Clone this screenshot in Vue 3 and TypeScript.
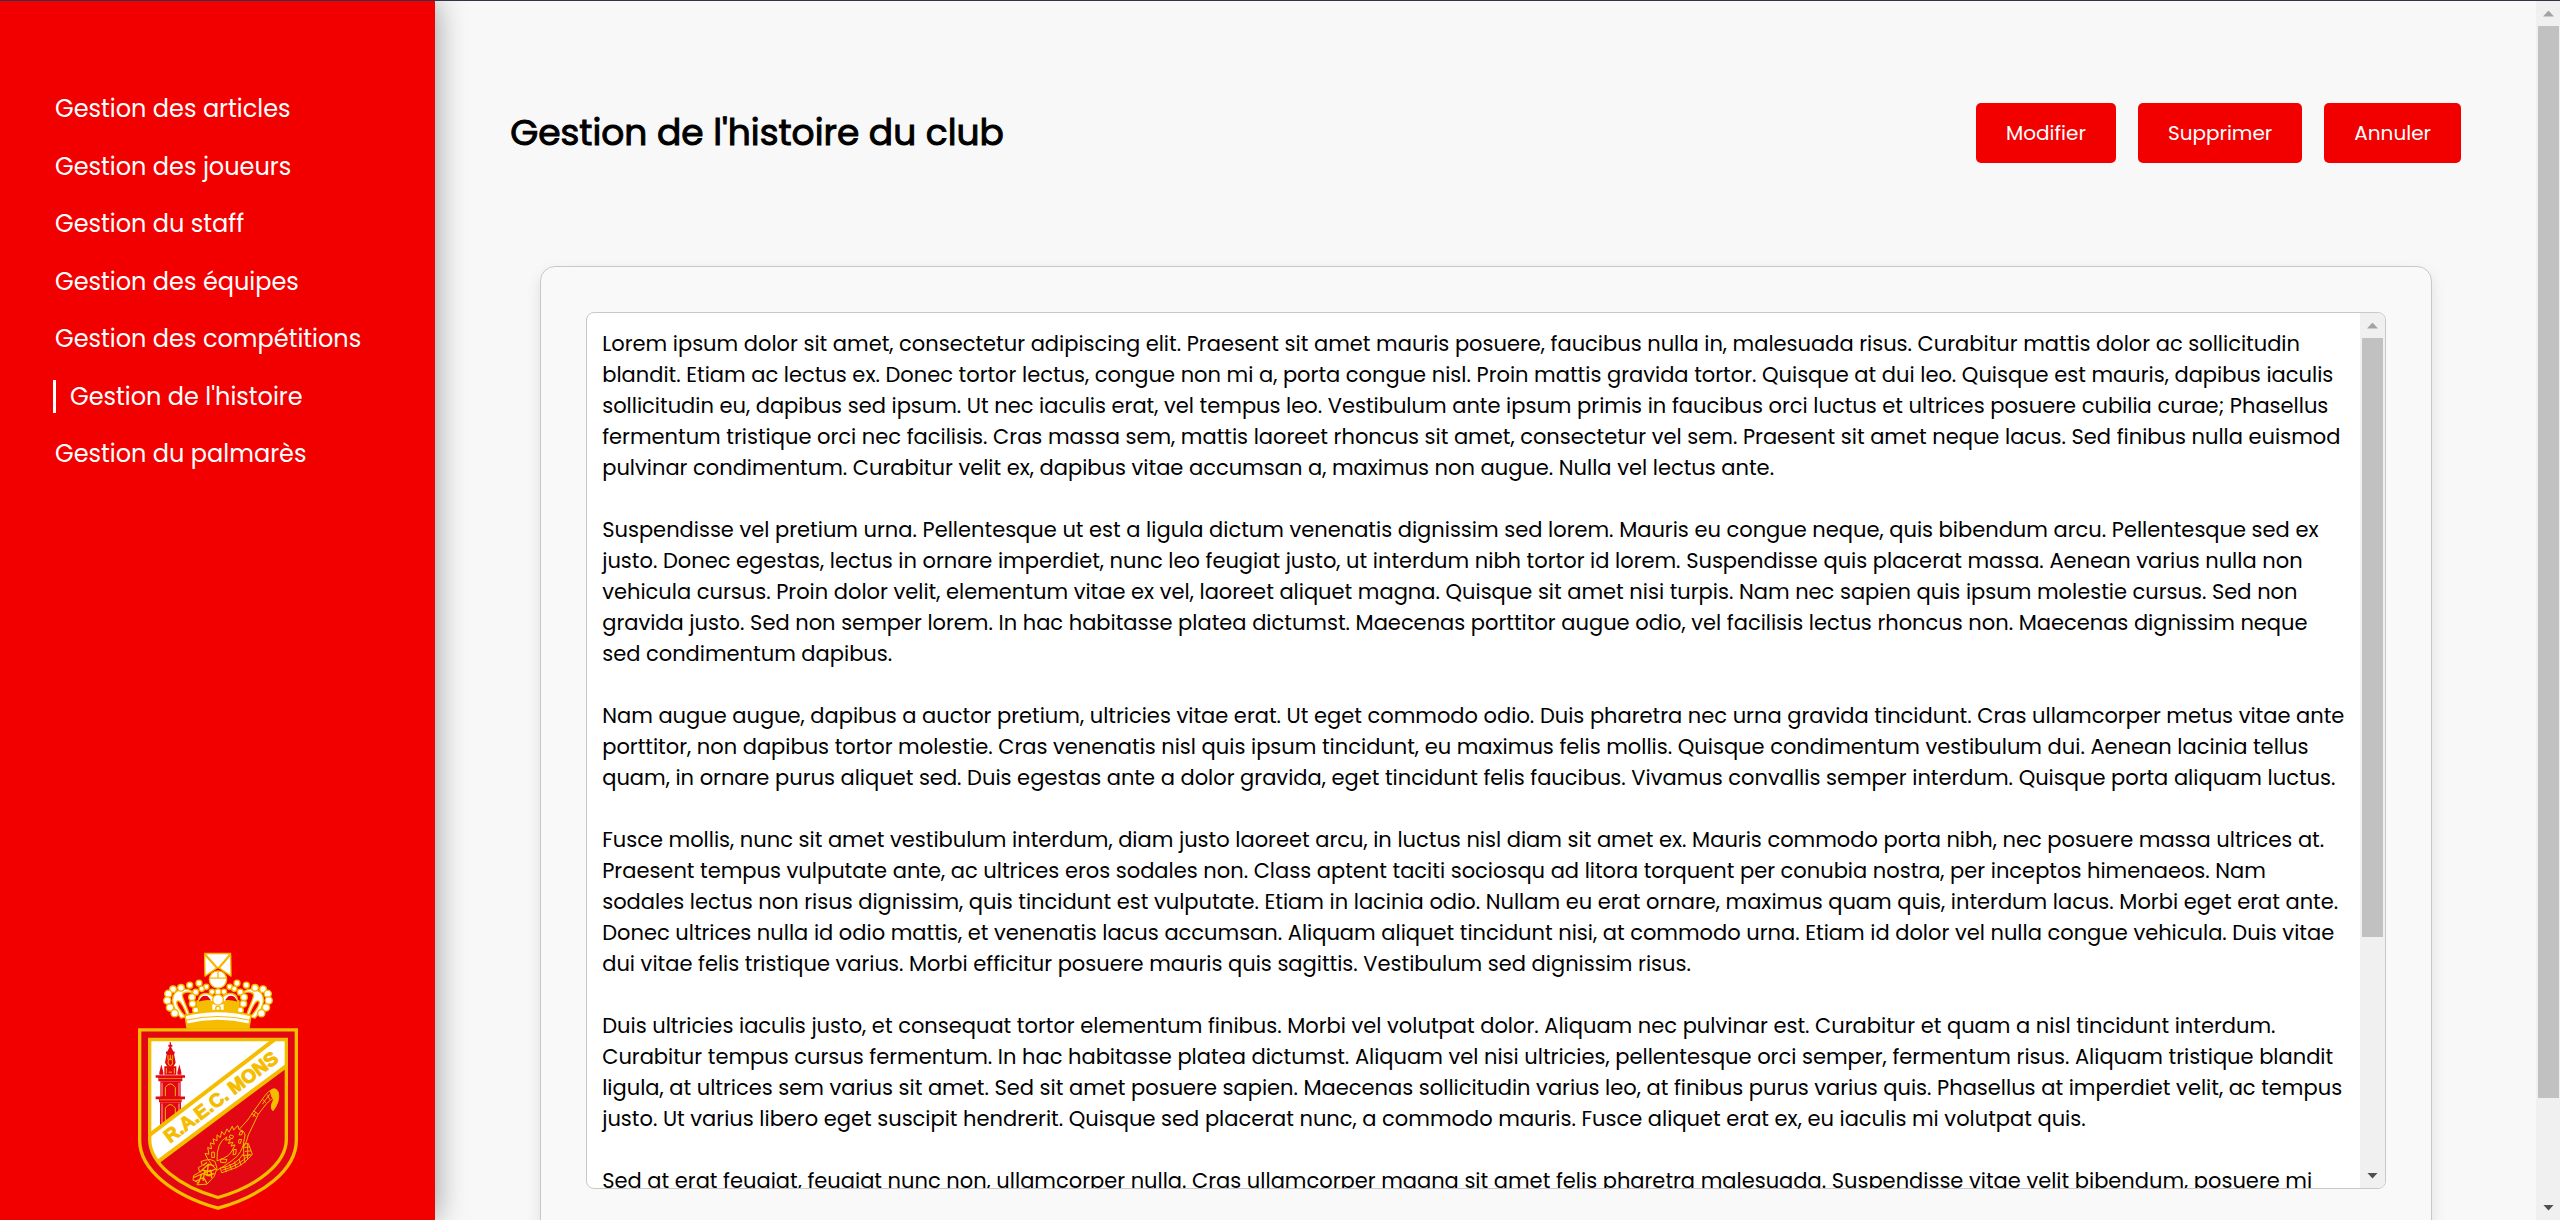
<script setup lang="ts">
import { ref } from 'vue'

interface NavItem {
  label: string
  active?: boolean
}

const navItems: NavItem[] = [
  { label: 'Gestion des articles' },
  { label: 'Gestion des joueurs' },
  { label: 'Gestion du staff' },
  { label: 'Gestion des équipes' },
  { label: 'Gestion des compétitions' },
  { label: "Gestion de l'histoire", active: true },
  { label: 'Gestion du palmarès' },
]

const actions: string[] = ['Modifier', 'Supprimer', 'Annuler']

const paragraphs: string[][] = [
  [
    'Lorem ipsum dolor sit amet, consectetur adipiscing elit. Praesent sit amet mauris posuere, faucibus nulla in, malesuada risus. Curabitur mattis dolor ac sollicitudin',
    'blandit. Etiam ac lectus ex. Donec tortor lectus, congue non mi a, porta congue nisl. Proin mattis gravida tortor. Quisque at dui leo. Quisque est mauris, dapibus iaculis',
    'sollicitudin eu, dapibus sed ipsum. Ut nec iaculis erat, vel tempus leo. Vestibulum ante ipsum primis in faucibus orci luctus et ultrices posuere cubilia curae; Phasellus',
    'fermentum tristique orci nec facilisis. Cras massa sem, mattis laoreet rhoncus sit amet, consectetur vel sem. Praesent sit amet neque lacus. Sed finibus nulla euismod',
    'pulvinar condimentum. Curabitur velit ex, dapibus vitae accumsan a, maximus non augue. Nulla vel lectus ante.',
  ],
  [
    'Suspendisse vel pretium urna. Pellentesque ut est a ligula dictum venenatis dignissim sed lorem. Mauris eu congue neque, quis bibendum arcu. Pellentesque sed ex',
    'justo. Donec egestas, lectus in ornare imperdiet, nunc leo feugiat justo, ut interdum nibh tortor id lorem. Suspendisse quis placerat massa. Aenean varius nulla non',
    'vehicula cursus. Proin dolor velit, elementum vitae ex vel, laoreet aliquet magna. Quisque sit amet nisi turpis. Nam nec sapien quis ipsum molestie cursus. Sed non',
    'gravida justo. Sed non semper lorem. In hac habitasse platea dictumst. Maecenas porttitor augue odio, vel facilisis lectus rhoncus non. Maecenas dignissim neque',
    'sed condimentum dapibus.',
  ],
  [
    'Nam augue augue, dapibus a auctor pretium, ultricies vitae erat. Ut eget commodo odio. Duis pharetra nec urna gravida tincidunt. Cras ullamcorper metus vitae ante',
    'porttitor, non dapibus tortor molestie. Cras venenatis nisl quis ipsum tincidunt, eu maximus felis mollis. Quisque condimentum vestibulum dui. Aenean lacinia tellus',
    'quam, in ornare purus aliquet sed. Duis egestas ante a dolor gravida, eget tincidunt felis faucibus. Vivamus convallis semper interdum. Quisque porta aliquam luctus.',
  ],
  [
    'Fusce mollis, nunc sit amet vestibulum interdum, diam justo laoreet arcu, in luctus nisl diam sit amet ex. Mauris commodo porta nibh, nec posuere massa ultrices at.',
    'Praesent tempus vulputate ante, ac ultrices eros sodales non. Class aptent taciti sociosqu ad litora torquent per conubia nostra, per inceptos himenaeos. Nam',
    'sodales lectus non risus dignissim, quis tincidunt est vulputate. Etiam in lacinia odio. Nullam eu erat ornare, maximus quam quis, interdum lacus. Morbi eget erat ante.',
    'Donec ultrices nulla id odio mattis, et venenatis lacus accumsan. Aliquam aliquet tincidunt nisi, at commodo urna. Etiam id dolor vel nulla congue vehicula. Duis vitae',
    'dui vitae felis tristique varius. Morbi efficitur posuere mauris quis sagittis. Vestibulum sed dignissim risus.',
  ],
  [
    'Duis ultricies iaculis justo, et consequat tortor elementum finibus. Morbi vel volutpat dolor. Aliquam nec pulvinar est. Curabitur et quam a nisl tincidunt interdum.',
    'Curabitur tempus cursus fermentum. In hac habitasse platea dictumst. Aliquam vel nisi ultricies, pellentesque orci semper, fermentum risus. Aliquam tristique blandit',
    'ligula, at ultrices sem varius sit amet. Sed sit amet posuere sapien. Maecenas sollicitudin varius leo, at finibus purus varius quis. Phasellus at imperdiet velit, ac tempus',
    'justo. Ut varius libero eget suscipit hendrerit. Quisque sed placerat nunc, a commodo mauris. Fusce aliquet erat ex, eu iaculis mi volutpat quis.',
  ],
  [
    'Sed at erat feugiat, feugiat nunc non, ullamcorper nulla. Cras ullamcorper magna sit amet felis pharetra malesuada. Suspendisse vitae velit bibendum, posuere mi',
  ],
]

const history = ref(paragraphs.map((lines) => lines.join('\n')).join('\n\n'))

// Share of each track that its thumb takes, in percent.
const pageThumb = 91.7
const textThumb = 72.6

// The crown is symmetric: its left half is drawn twice, once mirrored.
const halves: string[] = ['translate(0 0)', 'translate(590 0) scale(-1 1)']
const outerBeads: [number, number, number][] = [
  [238, 129, 9], [210, 135, 9], [184, 143, 10], [160, 147, 10],
  [146, 161, 11], [143, 181, 11], [151, 202, 11], [165, 219, 11],
]
const innerBeads: [number, number, number][] = [
  [260, 140, 8], [277, 155, 8], [246, 146, 8], [228, 156, 9], [217, 171, 10], [219, 191, 10], [228, 210, 9],
]
</script>

<template>
  <div class="page">
    <aside class="sidebar">
      <nav aria-label="Administration">
        <ul class="menu">
          <li v-for="item in navItems" :key="item.label">
            <a href="#" class="menu-link" :class="{ active: item.active }">{{ item.label }}</a>
          </li>
        </ul>
      </nav>

      <svg class="crest" viewBox="52 36 486 776" role="img" aria-label="R.A.E.C. Mons">
        <defs>
          <clipPath id="shield">
            <path d="M90 298H500V598C500 668 415 738 295 772C175 738 90 668 90 598Z" />
          </clipPath>
        </defs>

        <!-- crown -->
        <g stroke="#f5bc00" stroke-width="4" stroke-linejoin="round">
          <path d="M232 182Q295 158 358 182V226Q295 212 232 226Z" fill="#f5bc00" />
          <g v-for="half in halves" :key="half" :transform="half">
            <path
              d="M204 232C192 196 178 176 172 184C168 192 182 214 198 230L184 234C162 208 150 176 166 158C184 140 214 146 222 160C204 152 188 156 188 166C190 180 206 206 210 230Z"
              fill="#fff"
            />
            <path d="M236 184C236 158 262 152 284 172L280 188C262 174 250 172 236 184Z" fill="#fff" />
            <path d="M238 182Q246 162 264 168L274 180Q256 178 238 184Z" fill="#e30613" stroke="none" />
            <circle v-for="(b, i) in outerBeads" :key="'o' + i" :cx="b[0]" :cy="b[1]" :r="b[2]" fill="#fff" />
            <circle v-for="(b, i) in innerBeads" :key="'i' + i" :cx="b[0]" :cy="b[1]" :r="b[2]" fill="#fff" />
          </g>
          <path d="M276 190H314V216H276Z" fill="#fff" />
          <circle cx="295" cy="155" r="9" fill="#fff" />
          <circle cx="295" cy="179" r="16" fill="#fff" />
          <circle cx="295" cy="205" r="7" fill="#fff" />
          <path d="M202 264L196 226Q295 196 394 226L388 264Z" fill="#f5bc00" />
          <path d="M196 226Q295 202 394 226L388 252Q295 230 202 252Z" fill="#fff" />
          <path d="M199 240Q295 218 391 240" fill="none" stroke-width="3" />
          <path d="M255 40H333L295 84Z" fill="#fff" />
          <path d="M255 44L291 84L256 108Z" fill="#fff" />
          <path d="M333 44L299 84L334 108Z" fill="#fff" />
          <circle cx="295" cy="118" r="26" fill="#fff" />
          <path d="M270 114H320M295 92V114" fill="none" />
        </g>

        <!-- shield -->
        <path
          d="M60 269H530V600C530 688 430 766 295 804C160 766 60 688 60 600Z"
          fill="#e30613"
          stroke="#f5bc00"
          stroke-width="10"
        />
        <g clip-path="url(#shield)">
          <path d="M80 290H510V372L110 672L80 640Z" fill="#fff" />

          <!-- belfry -->
          <g fill="#e30613">
            <path d="M150 306H154V314H158V320H154L162 336H142L150 320H146V314H150Z" />
            <path d="M139 334H165V341H139ZM141 341H163L168 368L161 380H143L136 368Z" />
            <path d="M134 378H170V404H134Z" />
            <path d="M125 373L131 396V404H119V396ZM179 373L185 396V404H173V396Z" />
            <path d="M108 405H196V413H108ZM116 413H188V423H116Z" />
            <path d="M122 423H183V470H122ZM108 469H196V477H108ZM118 477H186V486H118Z" />
            <path d="M121 486H184V560H121Z" />
          </g>
          <g fill="none" stroke="#f5bc00" stroke-width="3">
            <path d="M145 345V358M152 344V360M159 345V358" />
            <ellipse cx="152" cy="366" rx="7" ry="10" />
            <path d="M140 384V400M164 384V400M147 396H157" />
            <path d="M137 468V442Q152 420 167 442V468M137 550V504Q152 482 167 504V530" />
            <path d="M127 428V468M178 428V468M127 490V550M178 490V520" stroke="#fff" stroke-width="2" />
            <path d="M118 415H186M120 479H184" stroke-width="2" />
          </g>

          <path d="M80 592L475 290L520 290V363L110 669L80 640Z" fill="#fff" />
          <path d="M80 592L475 290M105 672L510 370" fill="none" stroke="#f5bc00" stroke-width="12" />
          <text
            class="crest-name"
            transform="translate(151 610) rotate(-37)"
            fill="#f5bc00"
            stroke="#f5bc00"
            stroke-width="3"
          >R.A.E.C. MONS</text>

          <!-- dragon -->
          <g fill="none" stroke="#f5bc00" stroke-width="3" stroke-linejoin="round">
            <path
              d="M452 452Q466 438 476 456Q482 484 460 512Q452 506 456 492Q466 474 456 470Z"
              fill="#f5bc00"
            />
            <path d="M458 448Q446 452 436 466L400 516Q388 538 360 566" />
            <path d="M466 468Q440 486 416 522Q398 560 386 584Q382 604 372 620" />
            <path d="M402 512L416 522M396 520L410 530M408 516L400 530M444 464L450 478M430 478L438 488M450 462L428 492" />
            <path
              d="M264 656L256 640L268 642L264 622L276 626L272 608L284 612L280 596L292 602L292 584L302 592L306 574L314 584L322 566L328 576L338 558L342 570L354 556L358 568"
            />
            <path d="M358 568Q382 572 374 596Q370 640 336 662Q312 680 292 690Q276 676 264 656" />
            <path d="M292 662Q290 606 322 590L318 600L332 598L326 610L340 606L334 618L346 614L340 626Q332 650 292 662Z" />
            <path d="M332 584L342 588L338 596L328 592ZM362 574L370 574L366 584L358 584ZM358 598L366 598L362 610L356 608Z" />
            <path d="M342 628L350 628L348 642L340 644ZM304 656L322 658L318 668L302 666ZM276 636L284 636L284 652L276 652Z" />
            <path d="M372 612L386 610L398 642Q378 668 350 682L306 698L302 684Q350 676 372 640Z" />
            <path
              d="M374 622L390 620M376 634L394 632M370 646L396 644M384 610V658M372 640L376 668M358 656L364 676M344 664L350 684M330 672L336 690M316 680L320 696M308 690Q356 678 390 642"
            />
            <path
              d="M256 660L244 664L248 676L236 682L240 696L222 706L220 720L234 726L232 734L262 732L284 708L292 684L286 664L272 658Z"
            />
            <path
              d="M240 696L266 672L284 678M246 690L272 694L288 686M222 712L250 700L272 708M226 724L252 712L262 730M236 730L246 702L274 690L276 714M250 676L262 666M256 690L250 722M266 672L262 706L284 700"
              stroke-width="4"
            />
          </g>
        </g>
        <path
          d="M90 298H500V598C500 668 415 738 295 772C175 738 90 668 90 598Z"
          fill="none"
          stroke="#f5bc00"
          stroke-width="10"
        />
      </svg>
    </aside>

    <main class="content">
      <header class="header">
        <h1>Gestion de l'histoire du club</h1>
        <div class="actions">
          <button v-for="action in actions" :key="action" type="button">{{ action }}</button>
        </div>
      </header>

      <section class="card">
        <div class="field">
          <textarea v-model="history" aria-label="Histoire du club" spellcheck="false"></textarea>
          <div class="scrollbar" aria-hidden="true">
            <span class="arrow up"></span>
            <div class="track"><div class="thumb" :style="{ height: textThumb + '%' }"></div></div>
            <span class="arrow down"></span>
          </div>
        </div>
      </section>
    </main>

    <div class="scrollbar page-scrollbar" aria-hidden="true">
      <span class="arrow up"></span>
      <div class="track"><div class="thumb" :style="{ height: pageThumb + '%' }"></div></div>
      <span class="arrow down"></span>
    </div>
  </div>
</template>

<style>
body {
  margin: 0;
  background: #f8f8f8;
}
</style>

<style scoped>
.page {
  display: flex;
  box-sizing: border-box;
  height: 100vh;
  overflow: hidden;
  border-top: 1px solid #33334a;
  background: #f8f8f8;
  color: #000;
  font-family: Poppins, Inter, sans-serif;
}

.sidebar {
  display: flex;
  flex: none;
  flex-direction: column;
  justify-content: space-between;
  box-sizing: border-box;
  width: 17%;
  padding: 91px 0 9px;
  background: #f20000;
  box-shadow: 0 0 30px rgba(0, 0, 0, 0.4);
}

.menu {
  display: flex;
  flex-direction: column;
  justify-content: space-between;
  min-height: 378px;
  margin: 0;
  padding: 0 0 0 53px;
  list-style: none;
}

.menu-link {
  display: block;
  padding-left: 2px;
  color: #fff;
  font-size: 24px;
  line-height: 33px;
  text-decoration: none;
}

.menu-link.active {
  padding-left: 14px;
  border-left: 3px solid #fff;
}

.crest {
  align-self: center;
  width: 162px;
  height: 259px;
}

.crest-name {
  font: bold 57px 'Liberation Sans', sans-serif;
}

.content {
  flex: 1;
  min-width: 0;
  padding: 102px 75px 0;
}

.header {
  display: flex;
  align-items: center;
  justify-content: space-between;
  margin-bottom: 103px;
}

h1 {
  margin: 0;
  font-size: 36px;
  font-weight: 400;
  line-height: 60px;
  -webkit-text-stroke: 1px #000;
}

.actions {
  display: flex;
  gap: 22px;
}

.actions button {
  height: 60px;
  padding: 0 30px;
  border: 0;
  border-radius: 5px;
  background: #f20000;
  color: #fff;
  font-family: inherit;
  font-size: 20px;
}

.card {
  margin: 0 29px 0 30px;
  padding: 45px;
  border: 1px solid #c8c8c8;
  border-radius: 15px;
  background: #f9f9f9;
  box-shadow: 0 6px 15px rgba(0, 0, 0, 0.1);
}

.field {
  display: flex;
  box-sizing: border-box;
  height: 877px;
  overflow: hidden;
  border: 1px solid #c8c8c8;
  border-radius: 8px;
  background: #fff;
}

textarea {
  flex: 1;
  box-sizing: border-box;
  min-width: 0;
  margin: 0;
  padding: 15px 0 15px 15px;
  overflow: hidden;
  border: 0;
  outline: 0;
  background: transparent;
  color: #000;
  font-family: inherit;
  font-size: 21px;
  line-height: 31px;
  white-space: pre;
  resize: none;
}

.scrollbar {
  display: flex;
  flex: none;
  flex-direction: column;
  box-sizing: border-box;
  width: 25px;
  padding: 0 2px;
  background: #f0f0f0;
}

.page-scrollbar {
  width: 24px;
  padding-right: 1px;
}

.arrow {
  display: flex;
  align-items: center;
  justify-content: center;
  height: 25px;
}

.arrow::before {
  width: 11px;
  height: 6px;
  content: '';
}

.arrow.up::before {
  background: #a3a3a3;
  clip-path: polygon(50% 0, 100% 100%, 0 100%);
}

.arrow.down::before {
  background: #505050;
  clip-path: polygon(0 0, 100% 0, 50% 100%);
}

.track {
  flex: 1;
}

.thumb {
  background: #c1c1c1;
}
</style>
